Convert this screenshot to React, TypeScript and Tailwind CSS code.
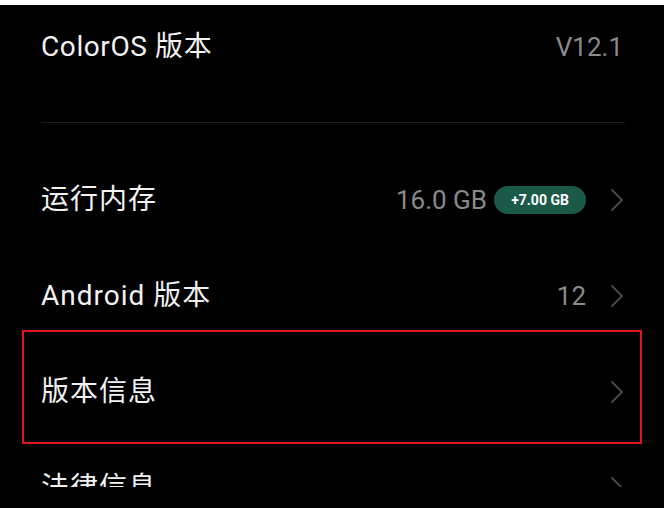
import React from "react";

const font = { fontFamily: '"Roboto", "Noto Sans CJK SC", sans-serif' };

function Chevron() {
  return (
    <svg width="14" height="24" viewBox="0 0 14 24" className="shrink-0">
      <polyline points="2,2 12,12 2,22" fill="none" stroke="#4a4a4a" strokeWidth="1.8" strokeLinecap="round" strokeLinejoin="round" />
    </svg>
  );
}

function Row({ label, children }: { label: string; children?: React.ReactNode }) {
  return (
    <div className="flex h-[96px] shrink-0 items-center justify-between pl-[41px] pr-[40px]">
      <span className="text-[28px] text-[#f2f2f2] leading-none tracking-[1px]">{label}</span>
      <div className="flex items-center">{children}</div>
    </div>
  );
}

export default function App() {
  return (
    <div className="relative h-[508px] w-[664px] overflow-hidden bg-black" style={font}>
      <div className="h-[5px] bg-white" />
      <div className="flex h-[482px] flex-col overflow-hidden">
        <div className="flex h-[84px] shrink-0 items-center justify-between pl-[41px] pr-[41px]">
          <span className="text-[28px] text-[#f2f2f2] leading-none tracking-[0.6px]">ColorOS 版本</span>
          <span className="text-[26px] text-[#8a8a8a] leading-none">V12.1</span>
        </div>
        <div className="mt-[33px] ml-[41px] mr-[39px] h-px shrink-0 bg-[#1e1e1e]" />
        <div className="h-[29px] shrink-0" />
        <Row label="运行内存">
          <span className="text-[26px] text-[#8a8a8a] leading-none">16.0 GB</span>
          <span className="ml-[7px] flex h-[28px] w-[92px] items-center justify-center rounded-full bg-[#1b5a49] text-[14px] font-bold text-white">
            +7.00 GB
          </span>
          <span className="ml-[24px]">
            <Chevron />
          </span>
        </Row>
        <Row label="Android 版本">
          <span className="text-[26px] text-[#8a8a8a] leading-none">12</span>
          <span className="ml-[24px]">
            <Chevron />
          </span>
        </Row>
        <Row label="版本信息">
          <Chevron />
        </Row>
        <Row label="法律信息">
          <Chevron />
        </Row>
      </div>
      <div className="pointer-events-none absolute left-[22px] top-[330px] h-[114px] w-[620px] border-2 border-[#e0141c]" />
    </div>
  );
}
